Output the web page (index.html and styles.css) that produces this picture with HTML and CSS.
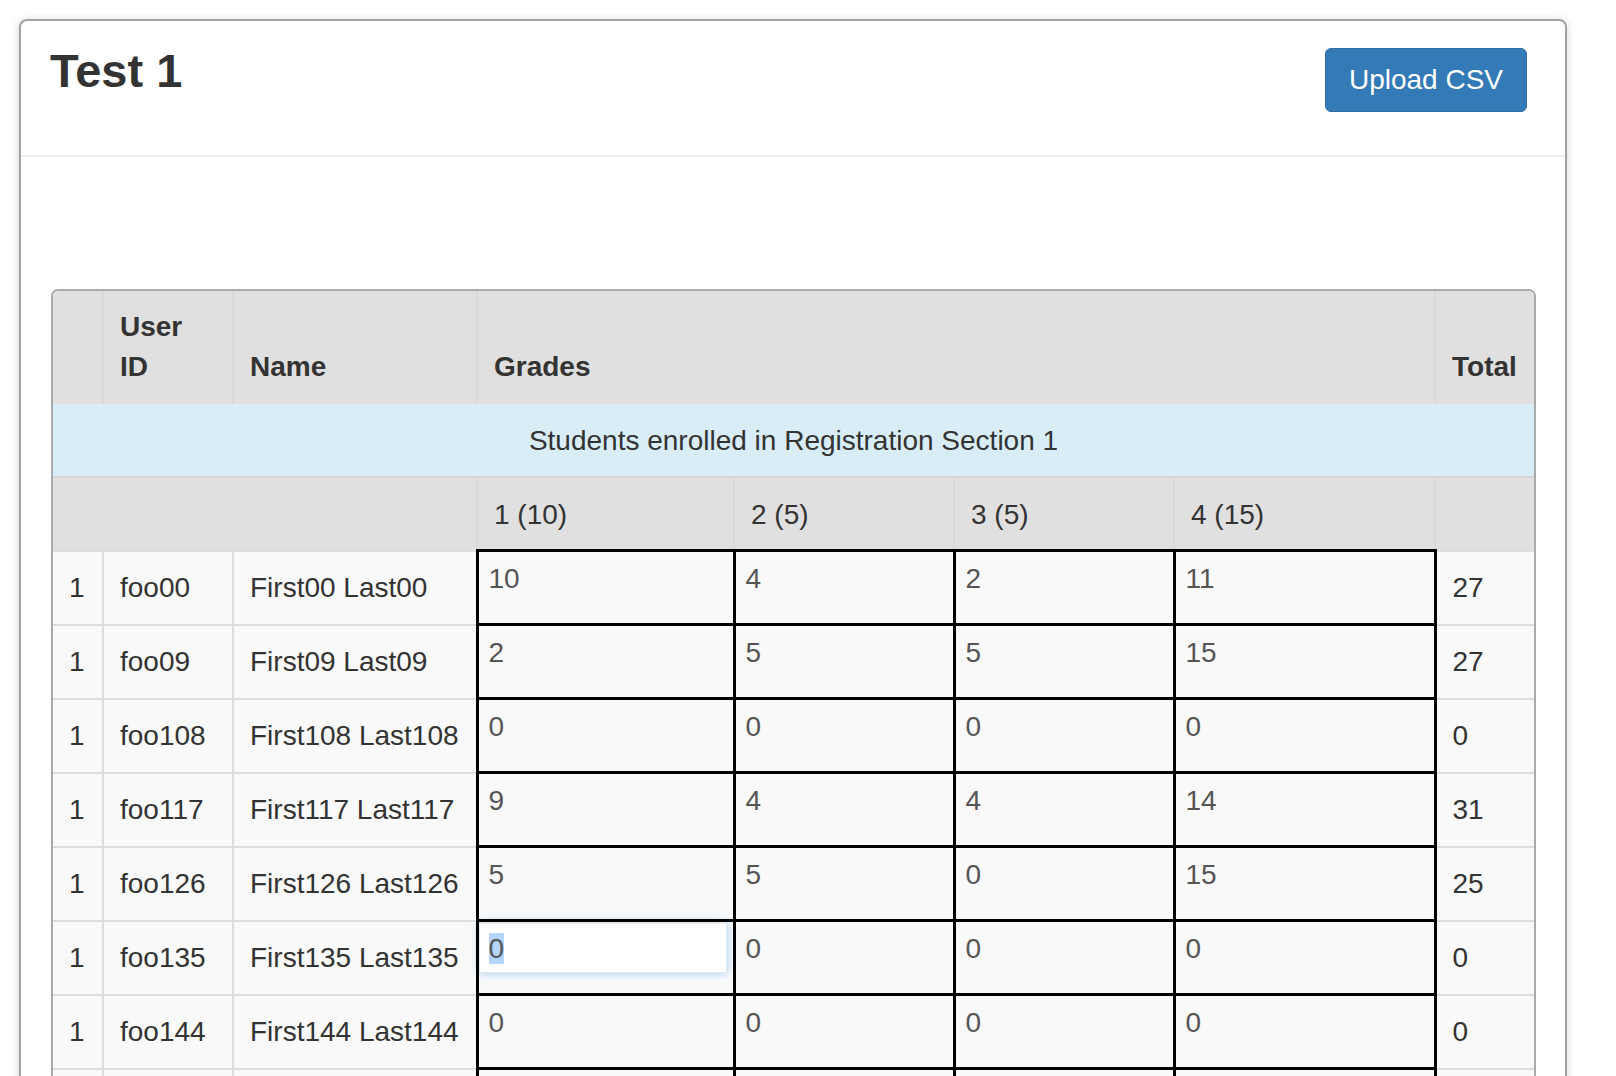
FILE: index.html
```html
<!DOCTYPE html>
<html lang="en">
<head>
<meta charset="utf-8">
<title>Test 1</title>
<link rel="stylesheet" href="styles.css">
</head>
<body>
<div class="page">
  <section class="panel">
    <header class="panel-heading">
      <h1 class="panel-title">Test 1</h1>
      <button class="btn btn-primary" type="button">Upload CSV</button>
    </header>
    <div class="panel-body">
      <div class="table-frame">
        <table class="grades">
          <colgroup>
            <col class="c-sec"><col class="c-uid"><col class="c-name">
            <col class="c-g1"><col class="c-g2"><col class="c-g3"><col class="c-g4">
            <col class="c-total">
          </colgroup>
          <thead>
            <tr class="head-row">
              <th></th>
              <th>User ID</th>
              <th>Name</th>
              <th colspan="4">Grades</th>
              <th>Total</th>
            </tr>
          </thead>
          <tbody>
            <tr class="section-row">
              <td colspan="8">Students enrolled in Registration Section 1</td>
            </tr>
            <tr class="problem-row">
              <th colspan="3"></th>
              <th>1 (10)</th>
              <th>2 (5)</th>
              <th>3 (5)</th>
              <th>4 (15)</th>
              <th></th>
            </tr>
            <tr class="student">
              <td>1</td><td>foo00</td><td>First00 Last00</td>
              <td class="grade"><div class="grade-input">10</div></td>
              <td class="grade"><div class="grade-input">4</div></td>
              <td class="grade"><div class="grade-input">2</div></td>
              <td class="grade"><div class="grade-input">11</div></td>
              <td>27</td>
            </tr>
            <tr class="student">
              <td>1</td><td>foo09</td><td>First09 Last09</td>
              <td class="grade"><div class="grade-input">2</div></td>
              <td class="grade"><div class="grade-input">5</div></td>
              <td class="grade"><div class="grade-input">5</div></td>
              <td class="grade"><div class="grade-input">15</div></td>
              <td>27</td>
            </tr>
            <tr class="student">
              <td>1</td><td>foo108</td><td>First108 Last108</td>
              <td class="grade"><div class="grade-input">0</div></td>
              <td class="grade"><div class="grade-input">0</div></td>
              <td class="grade"><div class="grade-input">0</div></td>
              <td class="grade"><div class="grade-input">0</div></td>
              <td>0</td>
            </tr>
            <tr class="student">
              <td>1</td><td>foo117</td><td>First117 Last117</td>
              <td class="grade"><div class="grade-input">9</div></td>
              <td class="grade"><div class="grade-input">4</div></td>
              <td class="grade"><div class="grade-input">4</div></td>
              <td class="grade"><div class="grade-input">14</div></td>
              <td>31</td>
            </tr>
            <tr class="student">
              <td>1</td><td>foo126</td><td>First126 Last126</td>
              <td class="grade"><div class="grade-input">5</div></td>
              <td class="grade"><div class="grade-input">5</div></td>
              <td class="grade"><div class="grade-input">0</div></td>
              <td class="grade"><div class="grade-input">15</div></td>
              <td>25</td>
            </tr>
            <tr class="student">
              <td>1</td><td>foo135</td><td>First135 Last135</td>
              <td class="grade"><div class="grade-input is-focused"><span class="sel">0</span></div></td>
              <td class="grade"><div class="grade-input">0</div></td>
              <td class="grade"><div class="grade-input">0</div></td>
              <td class="grade"><div class="grade-input">0</div></td>
              <td>0</td>
            </tr>
            <tr class="student">
              <td>1</td><td>foo144</td><td>First144 Last144</td>
              <td class="grade"><div class="grade-input">0</div></td>
              <td class="grade"><div class="grade-input">0</div></td>
              <td class="grade"><div class="grade-input">0</div></td>
              <td class="grade"><div class="grade-input">0</div></td>
              <td>0</td>
            </tr>
            <tr class="student">
              <td>1</td><td>foo153</td><td>First153 Last153</td>
              <td class="grade"><div class="grade-input">0</div></td>
              <td class="grade"><div class="grade-input">0</div></td>
              <td class="grade"><div class="grade-input">0</div></td>
              <td class="grade"><div class="grade-input">0</div></td>
              <td>0</td>
            </tr>
          </tbody>
        </table>
      </div>
    </div>
  </section>
</div>
</body>
</html>
```

FILE: styles.css
```css
* {
  box-sizing: border-box;
}

html, body {
  margin: 0;
  background: #fff;
}

body {
  font-family: "Liberation Sans", Arial, Helvetica, sans-serif;
  color: #333;
}

.page {
  padding: 19px 0 0 19px;
}

.panel {
  width: 1548px;
  background: #fff;
  border: 2px solid #a3a3a3;
  border-radius: 8px;
  box-shadow: 0 1px 8px rgba(0, 0, 0, 0.18);
}

.panel-heading {
  display: flex;
  justify-content: space-between;
  align-items: flex-start;
  padding: 27px 38px 43px 29px;
  border-bottom: 2px solid #eeeeee;
}

.panel-title {
  margin: -2px 0 0 0;
  font-size: 47px;
  line-height: 50px;
  font-weight: bold;
  color: #333;
}

.btn {
  font-family: inherit;
  font-size: 28px;
  line-height: 40px;
  padding: 11px 23px;
  border: 1px solid #2e6da4;
  border-radius: 6px;
  cursor: pointer;
}

.btn-primary {
  background: #337ab7;
  color: #fff;
}

.panel-body {
  padding: 132px 29px 0 30px;
}

.table-frame {
  border: 2px solid #aaaaaa;
  border-radius: 7px;
  overflow: hidden;
  background: #f9f9f9;
}

.grades {
  width: 100%;
  border-collapse: collapse;
  table-layout: fixed;
  font-size: 28px;
  line-height: 40px;
}

.c-sec { width: 50px; }
.c-uid { width: 130px; }
.c-name { width: 244px; }
.c-g1 { width: 257px; }
.c-g2 { width: 220px; }
.c-g3 { width: 220px; }
.c-g4 { width: 261px; }
.c-total { width: 99px; }

.grades th,
.grades td {
  padding: 16px;
  text-align: left;
}

.head-row th {
  background: #e0e0e0;
  font-weight: bold;
  vertical-align: bottom;
  padding-bottom: 17px;
  border-left: 2px solid #d9d9d9;
}

.head-row th:first-child {
  border-left: none;
}

.section-row td {
  background: #d9edf7;
  text-align: center;
  padding-top: 17px;
  padding-bottom: 15px;
}

.problem-row th {
  background: #e0e0e0;
  font-weight: normal;
  padding-top: 17px;
  padding-bottom: 14px;
  border-top: 2px solid #d6d6d6;
  border-left: 2px solid #d9d9d9;
}

.problem-row th:first-child {
  border-left: none;
}

.student td {
  background: #f9f9f9;
  vertical-align: top;
  border-top: 2px solid #dddddd;
  border-left: 2px solid #dddddd;
}

.student td:first-child {
  border-left: none;
}

.student td.grade {
  padding: 0;
  border: 3px solid #000;
}

.grade-input {
  width: calc(100% - 6px);
  height: 51px;
  padding: 6px 9px 5px;
  line-height: 40px;
  color: #555;
  border: 1px solid transparent;
}

.grade-input.is-focused {
  background: #fff;
  border-color: #dfeaf6;
  box-shadow: inset 0 1px 1px rgba(0, 0, 0, 0.075), 0 0 8px rgba(102, 175, 233, 0.6);
}

.sel {
  background: #b4d5fe;
}
```
